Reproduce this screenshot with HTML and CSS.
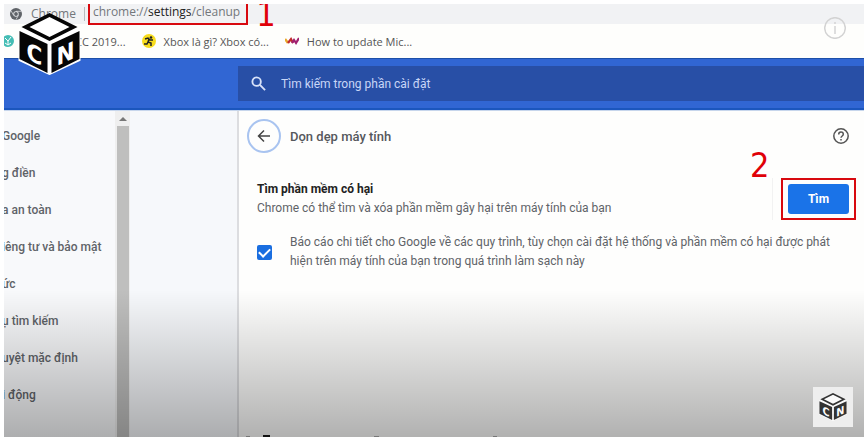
FILE: index.html
```html
<!DOCTYPE html>
<html lang="vi">
<head>
<meta charset="utf-8">
<meta name="viewport" content="width=device-width, initial-scale=1">
<title>Dọn dẹp máy tính</title>
<link rel="stylesheet" href="styles.css">
</head>
<body>
<svg class="defs" aria-hidden="true">
  <symbol id="cube" viewBox="0 0 62 62">
    <path class="halo" d="M31 2 L61 17 V47 L31 61 L1 47 V17 Z"/>
    <path class="face" fill-rule="evenodd" d="M31 0 L59 14 L31 28 L3 14 Z M31 4 L11 14 L31 24 L51 14 Z"/>
    <path class="face" d="M1 18 L29 31 V60 L1 46 Z"/>
    <path class="face" d="M61 18 L33 31 V60 L61 46 Z"/>
    <text class="letter" x="8" y="42" transform="skewY(25)">C</text>
    <text class="letter" x="38" y="71" transform="skewY(-25)">N</text>
  </symbol>
</svg>
<div class="frame">
  <header class="toolbar">
    <svg class="chrome-icon" viewBox="0 0 12 12" aria-hidden="true">
      <circle cx="6" cy="6" r="6" fill="#5f6368"/>
      <circle cx="6" cy="6" r="2.700" fill="#eceef0"/>
      <circle cx="6" cy="6" r="1.900" fill="#5f6368"/>
      <path d="M6 3.300H11.400M3.600 7.300L1 2.800M8.400 7.300L5.900 11.800" stroke="#eceef0" stroke-width=".7"/>
    </svg>
    <span class="origin">Chrome</span>
    <span class="bar"></span>
    <span class="address">chrome://<b>settings</b>/cleanup</span>
    <span class="step step-one">1</span>
  </header>
  <nav class="bookmarks">
    <a href="#" class="bookmark first">
      <svg viewBox="0 0 14 14" aria-hidden="true"><circle cx="4" cy="7" r="6" fill="#45bdb5"/><path d="M1 4l3 3 3-4M4 7v4M1 9l3 2 3-2" stroke="#fff" fill="none"/></svg>
      <span>CC 2019...</span>
    </a>
    <a href="#" class="bookmark">
      <svg viewBox="0 0 14 14" aria-hidden="true"><circle cx="7" cy="7" r="7" fill="#f7dc1c"/><circle cx="9" cy="3.500" r="1.300" fill="#222"/><path d="M3 5l3-1 2 2 3 0M7 5l-1 3 3 1 0 3M6 8l-1 2-3 0" stroke="#222" stroke-width="1.500" fill="none"/></svg>
      <span>Xbox là gì? Xbox có...</span>
    </a>
    <a href="#" class="bookmark">
      <svg viewBox="0 0 14 14" aria-hidden="true"><path d="M0 5l3 4" stroke="#e9a72b" stroke-width="2.500"/><path d="M3 9l3-4 2 4" stroke="#c02a2e" stroke-width="2.200" fill="none"/><path d="M7 9l2-3 2 3 3-5" stroke="#a0206f" stroke-width="2.200" fill="none"/></svg>
      <span>How to update Mic...</span>
    </a>
  </nav>
  <div class="searchband">
    <label class="search">
      <svg viewBox="0 0 16 16" aria-hidden="true"><circle cx="6" cy="6" r="4.500"/><path d="M9.500 9.500L15 15"/></svg>
      <input type="text" placeholder="Tìm kiếm trong phần cài đặt" aria-label="Tìm kiếm trong phần cài đặt">
    </label>
  </div>
  <div class="content">
    <nav class="sidebar">
      <a href="#">Google</a>
      <a href="#">g điền</a>
      <a href="#">a an toàn</a>
      <a href="#">iêng tư và bảo mật</a>
      <a href="#">ức</a>
      <a href="#">ụ tìm kiếm</a>
      <a href="#">uyệt mặc định</a>
      <a href="#">i động</a>
    </nav>
    <div class="scrollbar"><span class="arrow"></span><span class="thumb"></span></div>
    <div class="gutter"></div>
    <main class="panel">
      <div class="heading">
        <button class="back" type="button" aria-label="Quay lại">
          <svg viewBox="0 0 14 14" aria-hidden="true"><path d="M13 7H2M7 1.500L1.500 7 7 12.500"/></svg>
        </button>
        <h1>Dọn dẹp máy tính</h1>
        <button class="help" type="button" aria-label="Trợ giúp">
          <svg viewBox="0 0 16 16" aria-hidden="true"><circle cx="8" cy="8" r="7.200"/><path d="M5.700 6.500C5.700 3.200 10.300 3.400 10.300 6.300C10.300 8 8 8 8 9.800M8 11v1.500"/></svg>
        </button>
      </div>
      <section class="finder">
        <div class="about">
          <h2>Tìm phần mềm có hại</h2>
          <p>Chrome có thể tìm và xóa phần mềm gây hại trên máy tính của bạn</p>
        </div>
        <div class="action">
          <span class="mark"><button class="find" type="button">Tìm</button></span>
          <span class="step step-two">2</span>
        </div>
      </section>
      <label class="report">
        <input type="checkbox" checked>
        <span>Báo cáo chi tiết cho Google về các quy trình, tùy chọn cài đặt hệ thống và phần mềm có hại được phát hiện trên máy tính của bạn trong quá trình làm sạch này</span>
      </label>
    </main>
  </div>
  <div class="shade"></div>
  <svg class="logo" aria-hidden="true"><use href="#cube"/></svg>
  <svg class="info" viewBox="0 0 22 22" aria-hidden="true"><circle cx="11" cy="11" r="10.300"/><path d="M11 5v2M11 9v8"/></svg>
  <div class="watermark"><svg aria-hidden="true"><use href="#cube"/></svg></div>
  <svg class="caption" viewBox="0 0 260 2" aria-hidden="true"><path d="M3 1.500h4M131 1.500h5M250 1.500h4" stroke="#777"/><path d="M20 1h7" stroke="#111" stroke-width="2"/></svg>
</div>
</body>
</html>
```
FILE: styles.css
```css
* { box-sizing: border-box; }
body { margin: 0; background: #fff; font-family: Roboto, "Noto Sans", sans-serif; font-size: 12px; color: #5f6368; }
a { color: inherit; text-decoration: none; }
h1, h2, p { margin: 0; font-size: 12px; line-height: 19px; }
button { border: 0; padding: 0; background: none; font: inherit; }
.defs { position: absolute; width: 0; height: 0; }
.frame { height: 100vh; border: solid #fff; border-width: 4px 2px 0 4px; position: relative; display: flex; flex-direction: column; overflow: hidden; }

.toolbar { flex: none; height: 20px; display: flex; align-items: center; padding-left: 6px; background: #f1f2f4; font-family: "Open Sans", "Noto Sans", sans-serif; font-size: 12px; line-height: 16px; color: #73777b; position: relative; z-index: 1; }
.chrome-icon { width: 12px; height: 12px; margin-right: 9px; }
.bar { width: 1px; height: 14px; margin: 0 3px 0 8px; background: #b9bbbe; }
.address { height: 21px; padding: 0 6px 0 3px; border: 2px solid #d8090f; border-top: 0; align-self: flex-start; }
.address b { font-weight: 400; color: #222; }
.step { font-family: "DejaVu Sans Condensed", "DejaVu Sans", sans-serif; font-size: 34px; line-height: 34px; color: #e00008; }
.step-one { margin-left: 8px; }

.bookmarks { flex: none; height: 34px; display: flex; align-items: center; background: #fefefc; font-family: "Open Sans", "Noto Sans", sans-serif; font-size: 11px; color: #555; }
.bookmark { display: flex; align-items: center; gap: 8px; margin-right: 16px; white-space: nowrap; }
.bookmark svg { width: 14px; height: 14px; }
.first { gap: 57px; }

.searchband { flex: none; height: 52px; padding: 7px 0 7px 234px; background: #3166d3; border-top: 1px solid #1d4fa8; border-bottom: 2px solid #1b56bd; }
.search { display: flex; align-items: center; height: 100%; padding-left: 13px; gap: 15px; background: #284fa6; }
.search svg { width: 15px; height: 15px; fill: none; stroke: #d9e3fa; stroke-width: 2; }
.search input { flex: 1; min-width: 0; border: 0; padding: 0; background: none; font: 12px Roboto, sans-serif; color: #c8d6f7; outline: 0; }
.search input::placeholder { color: #c8d6f7; opacity: 1; }

.content { flex: 1; min-height: 0; display: flex; border-top: 1px solid #c7d6ec; }
.sidebar { width: 111px; padding-top: 7px; background: #f8f9fb; display: flex; flex-direction: column; overflow: hidden; }
.sidebar a { flex: none; height: 37px; line-height: 37px; margin-left: -2px; white-space: nowrap; font-weight: 500; }
.scrollbar { width: 15px; background: #efefef; display: flex; flex-direction: column; align-items: center; }
.arrow { margin: 6px 0 5px; border: 4px solid transparent; border-top: 0; border-bottom: 4px solid #777; }
.thumb { flex: 1; width: 12px; background: #bfbfbe; }
.gutter { width: 107px; background: #f6f8fb; }
.panel { flex: 1; min-width: 0; border-left: 2px solid #dcdde0; background: #fefefd; padding: 8px 14px 0 8px; }
.heading { display: flex; align-items: center; gap: 9px; }
.back { width: 34px; height: 34px; border: 2px solid #a9c4f0; border-radius: 50%; display: grid; place-items: center; }
.back svg { width: 14px; height: 14px; fill: none; stroke: #444; stroke-width: 1.5; }
.heading h1 { flex: 1; font-size: 13px; font-weight: 500; color: #55585c; }
.help { width: 16px; height: 16px; margin-right: 1px; }
.help svg { display: block; fill: none; stroke: #555; stroke-width: 1.5; }
.finder { display: flex; align-items: center; padding: 25px 0 0 10px; margin-right: -6px; }
.about { flex: 1; }
.about h2 { font-weight: 700; color: #222; }
.action { position: relative; border-left: 1px solid #f2f2f2; padding-left: 8px; }
.mark { display: block; border: 2px solid #d8090f; padding: 4px 5px; }
.find { display: block; width: 61px; height: 30px; border-radius: 3px; background: #1a73e8; color: #fff; font-weight: 700; }
.step-two { position: absolute; left: -23px; bottom: 38px; }
.report { display: flex; align-items: center; gap: 18px; padding: 13px 12px 0 10px; line-height: 19px; }
.report input { appearance: none; flex: none; width: 15px; height: 15px; margin: 0; border-radius: 2px; background: #1a6ee0; display: grid; place-items: center; }
.report input::after { content: ""; width: 5px; height: 9px; margin-bottom: 2px; border: solid #fff; border-width: 0 2px 2px 0; rotate: 45deg; }

.shade { position: absolute; inset: auto 0 0; height: 147px; background: linear-gradient(transparent, rgba(0, 0, 0, .3)); pointer-events: none; }
.logo { position: absolute; z-index: 2; left: 14px; top: 9px; width: 63px; height: 62px; }
.halo { fill: #fff; stroke: #fff; stroke-width: 2; }
.face { fill: #050505; }
.letter { fill: #fff; font: 700 24px "DejaVu Sans Condensed", "Liberation Sans", sans-serif; }
.info { position: absolute; z-index: 2; right: 18px; top: 13px; width: 22px; height: 22px; fill: none; stroke: #d3d3d3; stroke-width: 1.5; }
.watermark { position: absolute; right: 11px; bottom: 10px; width: 40px; height: 40px; display: grid; place-items: center; background: #eee; }
.watermark svg { width: 30px; height: 28px; opacity: .8; }
.caption { position: absolute; left: 239px; bottom: 0; width: 260px; height: 2px; }
```
